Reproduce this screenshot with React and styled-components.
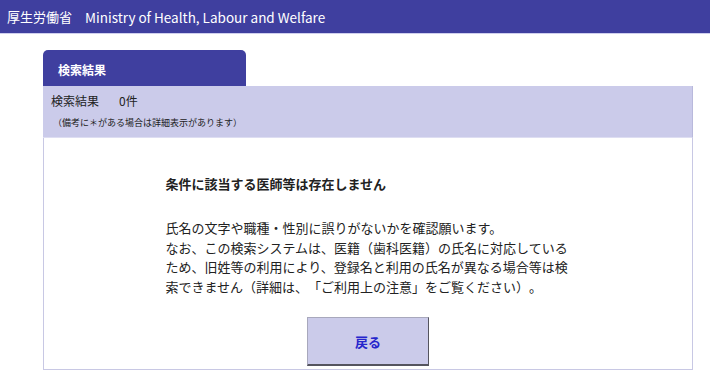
import styled, { createGlobalStyle } from "styled-components";

const GlobalStyle = createGlobalStyle`
  body {
    margin: 0;
    background: #fff;
    font-family: "Noto Sans CJK JP", "Noto Sans", sans-serif;
    color: #222;
    text-spacing-trim: space-all;
  }
`;

const Header = styled.header`
  height: 33px;
  background: #3f3f9f;
  border-bottom: 1px solid #cfcfee;
  display: flex;
  align-items: center;
  padding-left: 7px;
  color: #fff;
  font-size: 13px;
  span {
    margin-left: 13px;
    font-size: 13.5px;
  }
`;

const Main = styled.main`
  width: 650px;
  margin: 16px 0 0 43px;
`;

const Tab = styled.div`
  width: 203px;
  height: 36px;
  box-sizing: border-box;
  background: #3f3f9f;
  border-radius: 5px 5px 0 0;
  color: #fff;
  font-size: 12px;
  font-weight: bold;
  display: flex;
  align-items: center;
  padding: 2px 0 0 15px;
`;

const Summary = styled.div`
  height: 52px;
  box-sizing: border-box;
  background: #cbcbea;
  border-right: 1px solid #b9b9dc;
  border-bottom: 1px solid #dedef2;
  padding: 6px 8px 0;
`;

const Count = styled.div`
  font-size: 12px;
  line-height: 17px;
  b {
    font-weight: normal;
    margin-left: 20px;
  }
`;

const Note = styled.div`
  font-size: 9px;
  margin-top: 7px;
  padding-left: 2px;
`;

const Body = styled.div`
  height: 232px;
  box-sizing: border-box;
  border: 1px solid #c8c8e4;
  border-top: none;
  display: flex;
  flex-direction: column;
  align-items: center;
  padding-top: 36px;
`;

const Message = styled.div`
  width: 405px;
  font-size: 13px;
  line-height: 19.4px;
  h2 {
    font-size: 13px;
    font-weight: bold;
    margin: 0 0 25px;
  }
  p {
    margin: 0;
  }
`;

const BackButton = styled.button`
  margin-top: 21px;
  width: 122px;
  height: 49px;
  background: #cbcbea;
  border: 1px solid #a8a8bc;
  border-right-color: #55555f;
  border-bottom: 2px solid #55555f;
  color: #2626cc;
  font-family: inherit;
  font-size: 13px;
  font-weight: bold;
`;

const App = () => {
  return (
    <>
      <GlobalStyle />
      <Header>
        厚生労働省<span>Ministry of Health, Labour and Welfare</span>
      </Header>
      <Main>
        <Tab>検索結果</Tab>
        <Summary>
          <Count>
            検索結果<b>0件</b>
          </Count>
          <Note>（備考に＊がある場合は詳細表示があります）</Note>
        </Summary>
        <Body>
          <Message>
            <h2>条件に該当する医師等は存在しません</h2>
            <p>
              氏名の文字や職種・性別に誤りがないかを確認願います。
              <br />
              なお、この検索システムは、医籍（歯科医籍）の氏名に対応しているため、旧姓等の利用により、登録名と利用の氏名が異なる場合等は検索できません（詳細は、「ご利用上の注意」をご覧ください）。
            </p>
          </Message>
          <BackButton>戻る</BackButton>
        </Body>
      </Main>
    </>
  );
};

export default App;
